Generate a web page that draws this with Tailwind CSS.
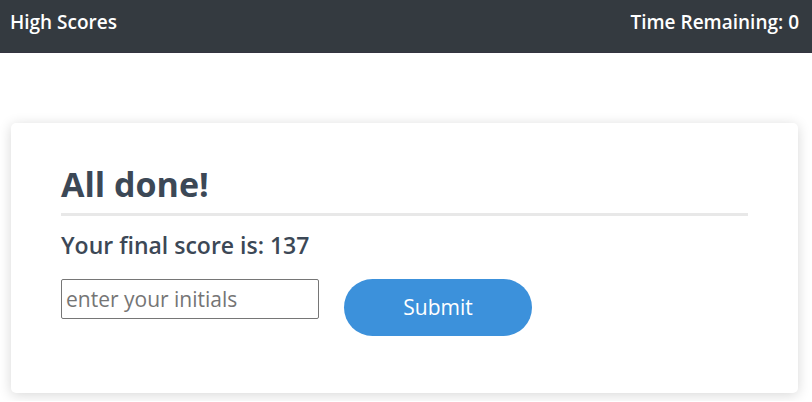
<!DOCTYPE html>
<html lang="en">
<head>
<meta charset="utf-8">
<meta name="viewport" content="width=device-width, initial-scale=1">
<title>Quiz</title>
<script src="https://cdn.jsdelivr.net/npm/@tailwindcss/browser@4"></script>
</head>
<body class="bg-white font-['Segoe_UI','Open_Sans',sans-serif] text-[#3c4856]">
<header class="flex justify-between border-b border-[#343440] bg-[#343a40] px-[10px] pt-2 pb-4 text-[19px] leading-7 font-semibold text-white">
<a href="#scores">High Scores</a>
<p class="pr-[3px]">Time Remaining: 0</p>
</header>
<main class="mt-[70px] mr-[14px] mb-2 ml-[11px] rounded-[5px] bg-white px-[50px] pt-[38px] pb-[57px] shadow-[0_2px_13px_rgba(0,0,0,0.16)]">
<h1 class="border-b-3 border-[#e8e8e8] pb-[6px] text-[34px] leading-[46px] font-bold">All done!</h1>
<p class="mt-[11px] text-[23px] leading-9 font-semibold">Your final score is: 137</p>
<form class="mt-4 flex items-start gap-[25px]">
<input type="text" aria-label="Enter your initials" placeholder="enter your initials" class="h-10 w-[258px] rounded-[2px] border border-[#767676] bg-white px-1 text-[21px] placeholder:text-[#757575]">
<button type="button" class="h-[57px] w-[188px] rounded-full bg-[#3c91db] text-[21px] text-white">Submit</button>
</form>
</main>
</body>
</html>
